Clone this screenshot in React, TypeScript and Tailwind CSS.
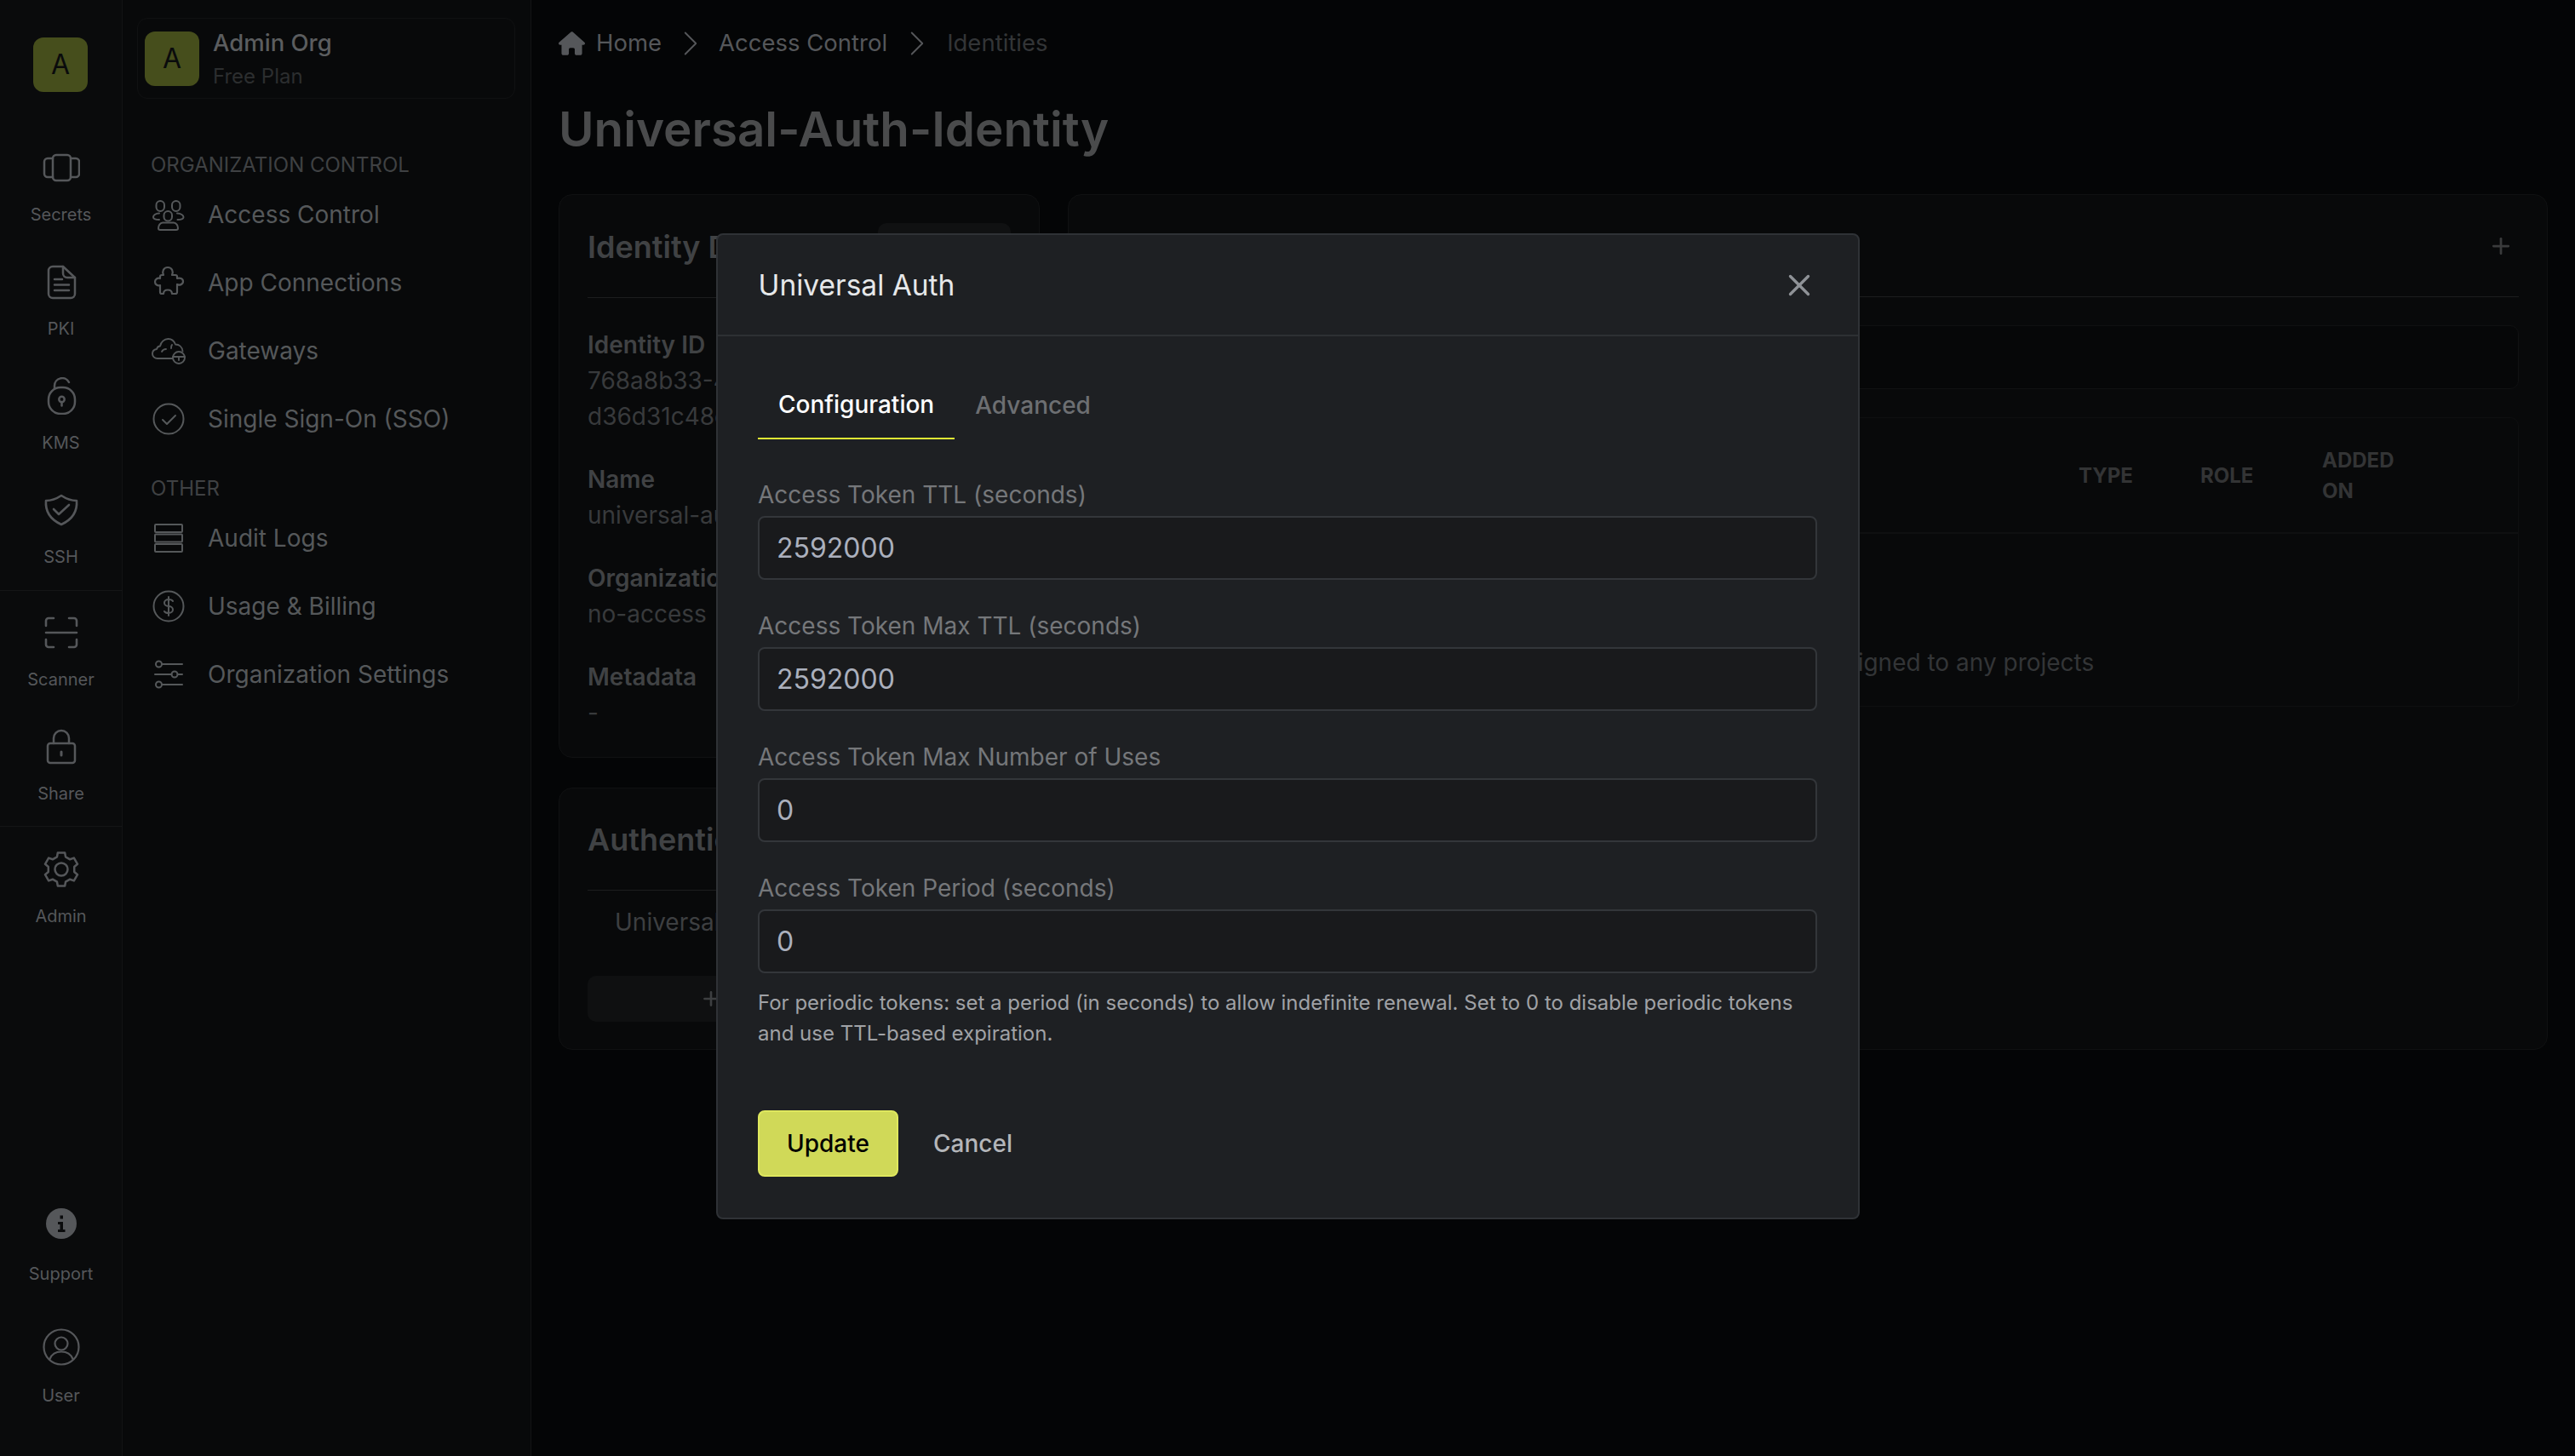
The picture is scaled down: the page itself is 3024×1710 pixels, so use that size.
import { ChevronRight, Plus, X } from "lucide-react";
import { FaHouse } from "react-icons/fa6";
import type { ReactNode } from "react";

const stroke = {
  fill: "none",
  stroke: "currentColor",
  strokeLinecap: "round",
  strokeLinejoin: "round",
} as const;

// six flat teeth round the middle of the 44 box
function gearPath() {
  const point = (deg: number, r: number) => {
    const a = (deg * Math.PI) / 180;
    return `${(22 + r * Math.cos(a)).toFixed(2)} ${(22 + r * Math.sin(a)).toFixed(2)}`;
  };
  let d = "";
  for (let i = 0; i < 6; i++) {
    const c = -90 + i * 60;
    d += `${i === 0 ? "M" : "L"}${point(c - 19, 15.5)} L${point(c - 12, 20)} L${point(c + 12, 20)} L${point(c + 19, 15.5)} `;
  }
  return d + "Z";
}

// rail icons, drawn on a 44 box
const railIcons: Record<string, ReactNode> = {
  secrets: (
    <g {...stroke} strokeWidth="2.5">
      <rect x="12" y="7" width="21" height="30" rx="4" />
      <path d="M12 11H6a4 4 0 0 0-4 4v14a4 4 0 0 0 4 4h6M33 11h6a4 4 0 0 1 4 4v14a4 4 0 0 1-4 4h-6" />
    </g>
  ),
  pki: (
    <g {...stroke} strokeWidth="2.5">
      <path d="M12 4h12l14 13v19a5 5 0 0 1-5 5H12a5 5 0 0 1-5-5V9a5 5 0 0 1 5-5z" />
      <path d="M24 4v8a5 5 0 0 0 5 5h9M14 19h9M14 25.500h17M14 32h17" />
    </g>
  ),
  kms: (
    <g {...stroke} strokeWidth="2.5">
      <path d="M14 13v-3a9 9 0 0 1 17-4" />
      <rect x="7" y="12" width="31" height="31" rx="14" />
      <circle cx="22.500" cy="26" r="3.200" />
      <path d="M22.500 29v4.500" />
    </g>
  ),
  ssh: (
    <g {...stroke} strokeWidth="2.6">
      <path d="M22 5c6 4 12 6 18 6 1 12-5 22-18 28C9 33 3 23 4 11c6 0 12-2 18-6z" />
      <path d="M13 21l6 6 12-11" />
    </g>
  ),
  scanner: (
    <g {...stroke} strokeWidth="2.6">
      <path d="M13 5H7a3 3 0 0 0-3 3v6M31 5h6a3 3 0 0 1 3 3v6M13 39H7a3 3 0 0 1-3-3v-6M31 39h6a3 3 0 0 0 3-3v-6M4 22h36" />
    </g>
  ),
  share: (
    <g {...stroke} strokeWidth="2.5">
      <path d="M13 18v-6a9 9 0 0 1 18 0v6" />
      <rect x="6" y="18" width="32" height="23" rx="3" />
      <path d="M22 28v4" strokeWidth="3" />
    </g>
  ),
  admin: (
    <g {...stroke} strokeWidth="2.5">
      <circle cx="22" cy="22" r="7.500" />
      <path d={gearPath()} />
    </g>
  ),
  support: (
    <g>
      <circle cx="22" cy="22" r="18" fill="currentColor" />
      <path d="M18 20h6v9h2.500v3h-8.500v-3h2.500v-6H18zM20.500 12.500h3.500v4h-3.500z" fill="#0a0b0c" />
    </g>
  ),
  user: (
    <g {...stroke} strokeWidth="2.2">
      <circle cx="22" cy="22" r="20.500" />
      <circle cx="22" cy="18" r="7.500" />
      <path d="M8.500 36c2-5 7-8.500 13.500-8.500S33.500 31 35.500 36" />
    </g>
  ),
};

// sidebar icons, drawn on a 40 box
const menuIcons: Record<string, ReactNode> = {
  access: (
    <g {...stroke} strokeWidth="2">
      <rect x="5.500" y="4" width="9.500" height="12" rx="4.700" />
      <rect x="24" y="4" width="9.500" height="12" rx="4.700" />
      <rect x="14.500" y="16" width="9.500" height="11.500" rx="4.700" />
      <path d="M9 18.500C4.500 18.500 2 21 2 23c0 2 2.500 3 7 3M30 18.500c4.500 0 7.500 2.500 7.500 4.500 0 2-2.500 3-7 3" />
      <path d="M13 29.500h13c3 0 5 3.500 5 6.500 0 1.200-1 2-2 2H10c-1 0-2-.8-2-2 0-3 2-6.500 5-6.500z" />
    </g>
  ),
  apps: (
    <path
      {...stroke}
      strokeWidth="2.200"
      d="M14 11c-2-4 0-9 5-9s7 5 5 9h4a2 2 0 0 1 2 2v2c3-1 7 0 7 3.500s-4 5-7 3.500v9a2 2 0 0 1-2 2h-4c0-3-2-4.500-5-4.500s-5 1.500-5 4.500h-2a2 2 0 0 1-2-2v-8c-3 1-6-1-6-4s3-5 6-4v-2a2 2 0 0 1 2-2z"
    />
  ),
  gateways: (
    <g {...stroke} strokeWidth="1.900">
      <path d="M25 29H7c-3.500 0-6-2.500-6-5.500 0-3 2-5 5-5.500 .5-2 2-3.500 4-3.500 1-5 5-8.500 9.500-8.500 4 0 7 2.500 8.500 6.500 4.500 0 8 3 8.500 8" />
      <path d="M12 21c1-2 3-3 5-3M24 13c-1 1-1 3-1 4" />
      <circle cx="32" cy="28" r="7" />
      <path d="M25 27h14M32 27v4" />
    </g>
  ),
  sso: (
    <g {...stroke} strokeWidth="2">
      <circle cx="20" cy="20" r="17.500" />
      <path d="M13 21l5 5 10-10" />
    </g>
  ),
  audit: (
    <g {...stroke} strokeWidth="2">
      <rect x="4" y="4" width="32" height="9" rx="1" />
      <rect x="4" y="15.500" width="32" height="9" rx="1" />
      <rect x="4" y="27" width="32" height="9" rx="1" />
    </g>
  ),
  billing: (
    <g {...stroke} strokeWidth="2">
      <circle cx="20" cy="20" r="17.500" />
      <path d="M25 14c-1-2-3-2-5-2-3 0-5 2-5 4s2 4 5 4 5 2 5 4-2 4-5 4c-2 0-4 0-5-2M20 9v22" />
    </g>
  ),
  settings: (
    <g {...stroke} strokeWidth="2">
      <circle cx="8.500" cy="8" r="3.500" />
      <path d="M12 8h24" />
      <circle cx="27" cy="20" r="3.500" />
      <path d="M4 20h19.500M30.500 20H36" />
      <circle cx="8.500" cy="32" r="3.500" />
      <path d="M12 32h24" />
    </g>
  ),
};

function RailItem({ icon, label, gap = "gap-[21px]" }: { icon: string; label: string; gap?: string }) {
  return (
    <div className={`flex h-[134px] flex-col items-center justify-center text-[#55575a] ${gap}`}>
      <svg viewBox="0 0 44 44" className="h-[44px] w-[44px]">
        {railIcons[icon]}
      </svg>
      <span className="text-[20px] leading-[24px]">{label}</span>
    </div>
  );
}

function MenuItem({ icon, label }: { icon: string; label: string }) {
  return (
    <div className="flex h-[80px] items-center gap-[26px] px-[34px] text-[#55585a]">
      <svg viewBox="0 0 40 40" className="h-[40px] w-[40px] shrink-0">
        {menuIcons[icon]}
      </svg>
      <span className="text-[28px] leading-[40px]">{label}</span>
    </div>
  );
}

function Rail() {
  return (
    <aside className="flex h-full w-[144px] shrink-0 flex-col border-r border-[#131415] bg-[#0a0b0c]">
      <div className="mx-[39px] mt-[44px] mb-[44px] flex h-[64px] w-[64px] items-center justify-center rounded-[12px] bg-[#464e1c] text-[32px] text-[#0a0b0c]">
        A
      </div>
      <RailItem icon="secrets" label="Secrets" />
      <RailItem icon="pki" label="PKI" />
      <RailItem icon="kms" label="KMS" />
      <RailItem icon="ssh" label="SSH" />
      <div className="mt-[5px] border-y border-[#141516] py-[4px]">
        <RailItem icon="scanner" label="Scanner" />
        <RailItem icon="share" label="Share" />
      </div>
      <div className="pt-[5px]">
        <RailItem icon="admin" label="Admin" />
      </div>
      <div className="mt-auto mb-[38px] flex flex-col gap-[10px]">
        <RailItem icon="support" label="Support" gap="gap-[25px]" />
        <RailItem icon="user" label="User" gap="gap-[23px]" />
      </div>
    </aside>
  );
}

function Sidebar() {
  return (
    <aside className="h-full w-[480px] shrink-0 border-r border-[#131415] bg-[#08090a]">
      <div className="mt-[21px] ml-[17px] flex h-[95px] w-[444px] items-center gap-[16px] rounded-[12px] border border-[#101112] pl-[8px]">
        <div className="flex h-[64px] w-[64px] items-center justify-center rounded-[12px] bg-[#464e1c] text-[32px] text-[#0a0b0c]">
          A
        </div>
        <div>
          <div className="text-[27.500px] leading-[40px] font-medium text-[#5b5d5f]">Admin Org</div>
          <div className="mt-[2px] text-[24px] leading-[36px] text-[#2c2e2f]">Free Plan</div>
        </div>
      </div>
      <div className="mt-[62px] mb-[2px] px-[33px] text-[24px] leading-[32px] text-[#3f4143]">
        ORGANIZATION CONTROL
      </div>
      <MenuItem icon="access" label="Access Control" />
      <MenuItem icon="apps" label="App Connections" />
      <MenuItem icon="gateways" label="Gateways" />
      <MenuItem icon="sso" label="Single Sign-On (SSO)" />
      <div className="mt-[26px] mb-[2px] px-[33px] text-[24px] leading-[32px] text-[#3f4143]">
        OTHER
      </div>
      <MenuItem icon="audit" label="Audit Logs" />
      <MenuItem icon="billing" label="Usage & Billing" />
      <MenuItem icon="settings" label="Organization Settings" />
    </aside>
  );
}

function Detail({ label, children }: { label: string; children: ReactNode }) {
  return (
    <div className="mb-[32px] text-[28px] leading-[42px]">
      <div className="font-semibold text-[#404244]">{label}</div>
      <div className="text-[#383a3c]">{children}</div>
    </div>
  );
}

function MainPage() {
  return (
    <main className="h-full min-w-0 flex-1 bg-[#040506] px-[32px]">
      <nav className="mt-[33px] flex h-[36px] items-center text-[27.500px] text-[#55575a]">
        <FaHouse className="mr-[13px] h-[28px] w-[31px]" />
        <span>Home</span>
        <span className="flex w-[67px] justify-center">
          <ChevronRight size={50} strokeWidth={0.9} />
        </span>
        <span>Access Control</span>
        <span className="flex w-[70px] justify-center">
          <ChevronRight size={50} strokeWidth={0.9} />
        </span>
        <span className="text-[#333537]">Identities</span>
      </nav>
      <h1 className="mt-[47px] text-[56.500px] leading-[72px] font-semibold text-[#4a4b4c]">
        Universal-Auth-Identity
      </h1>

      <div className="mt-[40px] flex gap-[33px]">
        <div className="flex w-[565px] shrink-0 flex-col gap-[35px]">
          <section className="h-[662px] rounded-[16px] border border-[#101112] bg-[#08090a] px-[33px]">
            <div className="flex h-[121px] items-start justify-between border-b border-[#1c1d1e] pt-[33px]">
              <h2 className="text-[36px] leading-[56px] font-semibold text-[#404244]">Identity Details</h2>
              <div className="h-[56px] w-[156px] rounded-[10px] bg-[#101112]" />
            </div>
            <div className="pt-[34px]">
              <Detail label="Identity ID">
                768a8b33-4e1f-4b6a-a2c7-
                <br />
                d36d31c48e07
              </Detail>
              <Detail label="Name">universal-auth-identity</Detail>
              <Detail label="Organization Role">no-access</Detail>
              <Detail label="Metadata">-</Detail>
            </div>
          </section>
          <section className="h-[308px] rounded-[16px] border border-[#101112] bg-[#08090a] px-[33px]">
            <h2 className="flex h-[120px] items-center border-b border-[#1c1d1e] text-[36px] font-semibold text-[#404244]">
              Authentication
            </h2>
            <div className="flex h-[74px] items-center pl-[32px] text-[28px] text-[#3d3f41]">
              Universal Auth
            </div>
            <div className="mt-[26px] flex h-[54px] items-center justify-center gap-[8px] rounded-[10px] bg-[#0f1011] text-[24px] text-[#3d3f41]">
              <Plus size={26} strokeWidth={2.4} />
              Add Auth Method
            </div>
          </section>
        </div>

        <section className="h-[1005px] flex-1 rounded-[16px] border border-[#101112] bg-[#08090a] px-[33px]">
          <div className="flex h-[120px] items-center justify-between border-b border-[#1c1d1e] pr-[6px]">
            <h2 className="pt-[8px] text-[32px] font-semibold text-[#404244]">Projects</h2>
            <Plus size={30} strokeWidth={2.2} className="text-[#3a3b3c]" />
          </div>
          <div className="mt-[33px] h-[75px] rounded-[10px] border border-[#101112] bg-[#060708]" />
          <div className="mt-[33px] h-[340px] rounded-[10px] border border-[#0e0f10]">
            <div className="flex h-[136px] items-center border-b-2 border-[#0f1011] pt-[2px] pl-[32px] text-[24px] leading-[36px] font-bold text-[#333435]">
              <span className="flex-1">NAME</span>
              <span className="w-[143px]">TYPE</span>
              <span className="w-[143px]">ROLE</span>
              <span className="w-[230px] pr-[120px]">ADDED ON</span>
            </div>
            <div className="flex h-[204px] flex-col items-center justify-end pb-[32px] text-[28px] leading-[42px] text-[#333537]">
              This identity has not been assigned to any projects
            </div>
          </div>
        </section>
      </div>
    </main>
  );
}

function Field({ label, value }: { label: string; value: string }) {
  return (
    <div>
      <label className="mb-[5px] block text-[28px] leading-[40px] text-[#75777a]">{label}</label>
      <input
        readOnly
        value={value}
        className="block h-[75px] w-full rounded-[8px] border-2 border-[#33363a] bg-[#191a1c] px-[20px] text-[32px] text-[#abb0bd] outline-none"
      />
    </div>
  );
}

function UniversalAuthModal() {
  return (
    <div className="fixed inset-0 flex items-center justify-center pb-[4px]">
      <div className="w-[1343px] rounded-[8px] border-2 border-[#2f3236] bg-[#1e2023]">
        <div className="flex h-[119px] items-center justify-between border-b-2 border-[#2d3033] px-[48px]">
          <h3 className="text-[33.500px] leading-[48px] text-[#e6e8ea]">Universal Auth</h3>
          <X size={42} strokeWidth={1.9} className="text-[#8f9297]" />
        </div>
        <div className="px-[47.500px] pt-[45px] pb-[48px]">
          <div className="flex h-[76px] text-[28px]">
            <div className="flex items-center border-b-2 border-[#e0ed34] px-[24px] pb-[4px] font-medium text-white">
              Configuration
            </div>
            <div className="flex items-center px-[24px] pb-[4px] font-medium text-[#6d6f72]">Advanced</div>
          </div>
          <div className="mt-[45px] flex flex-col gap-[34px]">
            <Field label="Access Token TTL (seconds)" value="2592000" />
            <Field label="Access Token Max TTL (seconds)" value="2592000" />
            <Field label="Access Token Max Number of Uses" value="0" />
            <Field label="Access Token Period (seconds)" value="0" />
          </div>
          <p className="mt-[17px] text-[24px] leading-[36px] text-[#a0a2a6]">
            For periodic tokens: set a period (in seconds) to allow indefinite renewal. Set to 0 to disable periodic
            tokens and use TTL-based expiration.
          </p>
          <div className="mt-[72px] flex items-center gap-[41px]">
            <button className="h-[78px] w-[165px] rounded-[8px] border-2 border-[#dfe85e] bg-[#d0d958] text-[28px] font-medium text-black">
              Update
            </button>
            <button className="text-[28px] font-medium text-[#b4b6ba]">Cancel</button>
          </div>
        </div>
      </div>
    </div>
  );
}

export default function App() {
  return (
    <div className="relative flex h-screen w-screen overflow-hidden bg-[#040506] font-[Inter,sans-serif]">
      <Rail />
      <Sidebar />
      <MainPage />
      <UniversalAuthModal />
    </div>
  );
}
